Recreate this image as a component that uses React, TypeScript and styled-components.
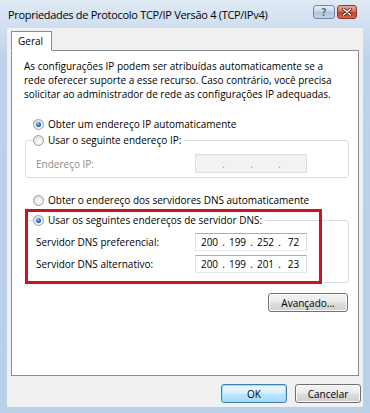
import React from 'react'
import styled, { createGlobalStyle } from 'styled-components'

const GlobalStyle = createGlobalStyle`
  html, body {
    margin: 0;
    padding: 0;
    background: #bcd2ea;
  }
  body {
    font-family: 'Open Sans', 'Noto Sans', sans-serif;
    font-size: 10px;
    color: #000;
  }
`

const Window = styled.div`
  width: 370px;
  height: 413px;
  box-sizing: border-box;
  display: flex;
  flex-direction: column;
  padding: 0 7px 6px 7px;
  background: linear-gradient(#dfe9f4 0, #cfdff0 28px, #bcd2ea 60px, #b9d0e9 100%);
`

const TitleBar = styled.div`
  height: 28px;
  flex-shrink: 0;
  display: flex;
  align-items: flex-start;
  justify-content: space-between;
  padding: 0 6px 0 1px;
`

const Title = styled.div`
  font-size: 11px;
  line-height: 14px;
  margin-top: 8px;
  color: #000;
  letter-spacing: -0.3px;
`

const Caption = styled.div`
  display: flex;
  gap: 2px;
  margin-top: 5px;
`

const CaptionButton = styled.div<{ close?: boolean }>`
  width: ${({ close }) => (close ? '20px' : '22px')};
  height: 14px;
  box-sizing: border-box;
  border: 1px solid ${({ close }) => (close ? '#8f3a2c' : '#6f8aa8')};
  border-radius: 3px;
  display: flex;
  align-items: center;
  justify-content: center;
  color: #56667c;
  font-size: 10px;
  font-weight: bold;
  background: ${({ close }) =>
    close
      ? 'linear-gradient(#e9a99a 0%, #d4735f 45%, #c0432c 55%, #d6654a 100%)'
      : 'linear-gradient(#e2ebf5 0%, #c9d8e9 45%, #aec2da 55%, #c3d4e8 100%)'};
`

const Client = styled.div`
  flex: 1;
  display: flex;
  flex-direction: column;
  background: #f0f0f0;
  padding: 3px 2px 4px 4px;
`

const TabStrip = styled.div`
  display: flex;
  height: 20px;
  margin-bottom: -1px;
`

const Tab = styled.div`
  position: relative;
  z-index: 1;
  box-sizing: border-box;
  height: 20px;
  padding: 0 8px 0 6px;
  background: #fff;
  border: 1px solid #898c95;
  border-bottom: 1px solid #fff;
  line-height: 18px;
  font-size: 10px;
`

const Panel = styled.div`
  width: 348px;
  height: 326px;
  box-sizing: border-box;
  background: #fff;
  border: 1px solid #898c95;
  padding: 8px 9px 0 12px;
  display: flex;
  flex-direction: column;
`

const Intro = styled.p`
  margin: 0;
  line-height: 14px;
  white-space: nowrap;
`

const RadioRow = styled.label<{ top?: number }>`
  display: flex;
  align-items: center;
  height: 14px;
  padding-left: 9px;
  margin-top: ${({ top }) => top ?? 0}px;
`

const RadioCircle = styled.span<{ checked?: boolean }>`
  width: 11px;
  height: 11px;
  box-sizing: border-box;
  border-radius: 50%;
  border: 1px solid #9a9ea4;
  margin-right: 4px;
  display: flex;
  align-items: center;
  justify-content: center;
  background: radial-gradient(circle at 60% 65%, #ffffff 0%, #e6e6e6 60%, #d2d2d2 100%);
  &::after {
    content: '';
    display: ${({ checked }) => (checked ? 'block' : 'none')};
    width: 5px;
    height: 5px;
    border-radius: 50%;
    background: radial-gradient(circle at 40% 35%, #8fd0ff 0%, #2a74c6 45%, #0f3f86 100%);
  }
`

const GroupBox = styled.fieldset<{ bottom: number; top?: number }>`
  margin: ${({ top }) => top ?? 0}px 0 0 1px;
  width: 324px;
  box-sizing: border-box;
  border: 1px solid #d5dfe5;
  border-radius: 3px;
  padding: 0 0 ${({ bottom }) => bottom}px 10px;
  min-width: 0;
`

const Legend = styled.legend`
  margin-left: -3px;
  padding: 0 3px 0 0;
`

const LegendRow = styled(RadioRow)`
  padding-left: 0;
`

const FieldRow = styled.div<{ top: number }>`
  display: grid;
  grid-template-columns: 159px 112px;
  align-items: center;
  margin-top: ${({ top }) => top}px;
`

const FieldLabel = styled.span<{ disabled?: boolean }>`
  color: ${({ disabled }) => (disabled ? '#8d8d8d' : '#000')};
`

const IpBox = styled.div<{ disabled?: boolean; h: number }>`
  height: ${({ h }) => h}px;
  box-sizing: border-box;
  display: flex;
  align-items: center;
  padding-left: 2px;
  border: 1px solid ${({ disabled }) => (disabled ? '#d9d9d9' : '#abadb3')};
  border-left-color: ${({ disabled }) => (disabled ? '#dedede' : '#dbdfe6')};
  border-right-color: ${({ disabled }) => (disabled ? '#dedede' : '#dbdfe6')};
  border-bottom-color: ${({ disabled }) => (disabled ? '#e0e0e0' : '#e3e9ef')};
  background: ${({ disabled }) => (disabled ? '#f2f2f2' : '#fff')};
  color: ${({ disabled }) => (disabled ? '#9a9a9a' : '#000')};
`

const Seg = styled.span`
  width: 23px;
  text-align: center;
`

const Dot = styled.span`
  width: 5px;
  text-align: center;
`

const DnsArea = styled.div`
  position: relative;
  margin-top: 6px;
`

const Highlight = styled.div`
  position: absolute;
  left: 1px;
  top: -4px;
  width: 297px;
  height: 75px;
  box-sizing: border-box;
  border: 3px solid #c8161f;
  pointer-events: none;
`

const ButtonBar = styled.div<{ pad?: number; top: number }>`
  display: flex;
  justify-content: flex-end;
  gap: 8px;
  margin-top: ${({ top }) => top}px;
  padding-right: ${({ pad }) => pad ?? 0}px;
`

const Button = styled.button<{ primary?: boolean; w: number }>`
  width: ${({ w }) => w}px;
  height: 19px;
  padding: 0;
  font-family: inherit;
  font-size: 10px;
  color: #000;
  border-radius: 3px;
  border: 1px solid ${({ primary }) => (primary ? '#3c7fb1' : '#707070')};
  background: ${({ primary }) =>
    primary
      ? 'linear-gradient(#eaf6fd 0%, #d9f0fc 48%, #bee6fd 52%, #a7d9f5 100%)'
      : 'linear-gradient(#f2f2f2 0%, #ebebeb 48%, #dddddd 52%, #cfcfcf 100%)'};
  box-shadow: inset 0 0 0 1px ${({ primary }) => (primary ? '#8fe4f7' : '#fcfcfc')};
`

function Radio({ checked, children }: { checked?: boolean; children: React.ReactNode }) {
  return (
    <>
      <RadioCircle checked={checked} />
      <span>{children}</span>
    </>
  )
}

function Ip({ parts, disabled, h }: { parts: string[]; disabled?: boolean; h: number }) {
  return (
    <IpBox disabled={disabled} h={h}>
      {parts.map((p, i) => (
        <React.Fragment key={i}>
          <Seg>{p}</Seg>
          {i < 3 && <Dot>.</Dot>}
        </React.Fragment>
      ))}
    </IpBox>
  )
}

export default function App() {
  return (
    <>
      <GlobalStyle />
      <Window>
        <TitleBar>
          <Title>Propriedades de Protocolo TCP/IP Versão 4 (TCP/IPv4)</Title>
          <Caption>
            <CaptionButton>?</CaptionButton>
            <CaptionButton close>
              <svg width="10" height="8" viewBox="0 0 10 8">
                <path d="M1.5 1 L8.5 7 M8.5 1 L1.5 7" stroke="#5a1f14" strokeWidth="3" strokeLinecap="round" />
                <path d="M1.5 1 L8.5 7 M8.5 1 L1.5 7" stroke="#fff" strokeWidth="1.6" strokeLinecap="round" />
              </svg>
            </CaptionButton>
          </Caption>
        </TitleBar>
        <Client>
          <TabStrip>
            <Tab>Geral</Tab>
          </TabStrip>
          <Panel>
            <Intro>
              As configurações IP podem ser atribuídas automaticamente se a
              <br />
              rede oferecer suporte a esse recurso. Caso contrário, você precisa
              <br />
              solicitar ao administrador de rede as configurações IP adequadas.
            </Intro>
            <RadioRow top={16}>
              <Radio checked>Obter um endereço IP automaticamente</Radio>
            </RadioRow>
            <GroupBox bottom={4} top={2}>
              <Legend>
                <LegendRow>
                  <Radio>Usar o seguinte endereço IP:</Radio>
                </LegendRow>
              </Legend>
              <FieldRow top={7}>
                <FieldLabel disabled>Endereço IP:</FieldLabel>
                <Ip parts={['', '', '', '']} disabled h={19} />
              </FieldRow>
            </GroupBox>
            <RadioRow top={15}>
              <Radio>Obter o endereço dos servidores DNS automaticamente</Radio>
            </RadioRow>
            <DnsArea>
              <GroupBox bottom={9}>
                <Legend>
                  <LegendRow>
                    <Radio checked>Usar os seguintes endereços de servidor DNS:</Radio>
                  </LegendRow>
                </Legend>
                <FieldRow top={6}>
                  <FieldLabel>Servidor DNS preferencial:</FieldLabel>
                  <Ip parts={['200', '199', '252', '72']} h={18} />
                </FieldRow>
                <FieldRow top={4}>
                  <FieldLabel>Servidor DNS alternativo:</FieldLabel>
                  <Ip parts={['200', '199', '201', '23']} h={18} />
                </FieldRow>
              </GroupBox>
              <Highlight />
            </DnsArea>
            <ButtonBar pad={1} top={10}>
              <Button w={80}>Avançado...</Button>
            </ButtonBar>
          </Panel>
          <ButtonBar top={8}>
            <Button primary w={66}>OK</Button>
            <Button w={66}>Cancelar</Button>
          </ButtonBar>
        </Client>
      </Window>
    </>
  )
}
